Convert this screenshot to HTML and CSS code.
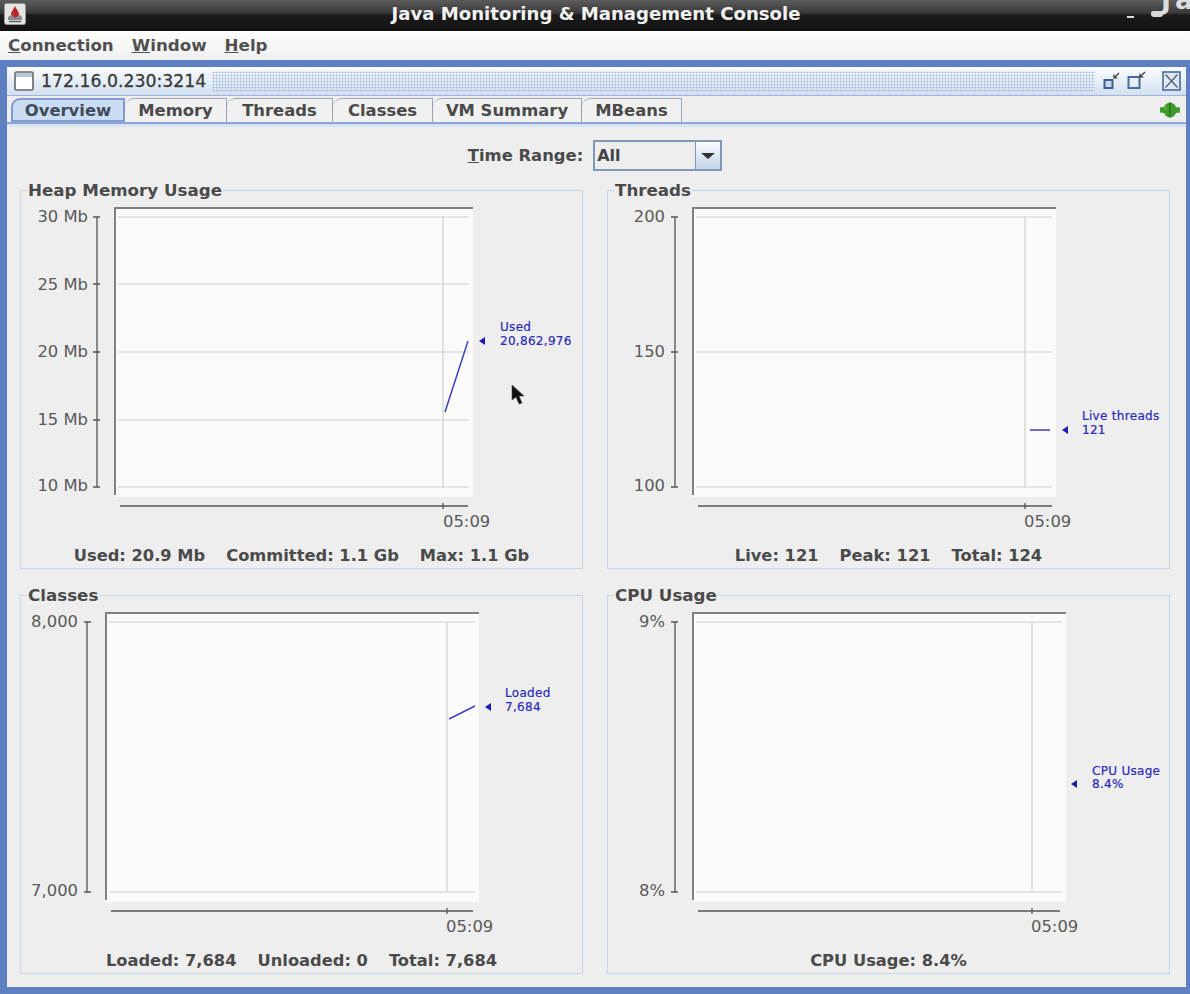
FILE: index.html
```html
<!DOCTYPE html>
<html>
<head>
    <title>Java Monitoring &amp; Management Console</title>
    <link rel="stylesheet" href="styles.css">
</head>
<body>
    <div class="app">
        <div class="titlebar">
            <svg class="app-icon" width="22" height="22" viewBox="0 0 22 22">
                <rect x="0.5" y="0.5" width="21" height="21" rx="2" fill="#e4e4e4" stroke="#999"/>
                <path d="M11 3 C13 7 15 9 15 11 C15 13.500 13 15 11 15 C9 15 7 13.500 7 11 C7 9 9 7 11 3 Z" fill="#b8282c"/>
                <path d="M4 14 L8 12 L11 15 L16 12 L18 14 L18 17 L4 17 Z" fill="#8a8d93"/>
                <path d="M5 18.500 L17 18.500" stroke="#55585e" stroke-width="1.4"/>
            </svg>
            <span class="title-text">Java Monitoring &amp; Management Console</span>
            <span class="win-min"></span>
            <span class="win-hook"></span>
            <span class="win-ghost">Ja</span>
        </div>

        <div class="menubar">
            <span class="menu"><u>C</u>onnection</span>
            <span class="menu"><u>W</u>indow</span>
            <span class="menu"><u>H</u>elp</span>
        </div>

        <div class="desktop">
            <div class="frame">
                <div class="frame-title">
                    <svg width="20" height="20" viewBox="0 0 20 20">
                        <rect x="1" y="1" width="18" height="18" rx="1.5" fill="#fff" stroke="#666" stroke-width="1.6"/>
                        <rect x="2" y="2" width="16" height="4" fill="#b9c6da"/>
                    </svg>
                    <span class="frame-name">172.16.0.230:3214</span>
                    <span class="dots"></span>
                    <div class="frame-buttons">
                        <svg width="18" height="20" viewBox="0 0 18 20">
                            <rect x="1.500" y="9" width="8" height="8" fill="#c9d8ea" stroke="#3f5f92" stroke-width="2"/>
                            <path d="M16 2 L11 7 M11 3.500 L11 7 L14.500 7" fill="none" stroke="#333" stroke-width="1.2"/>
                        </svg>
                        <svg width="20" height="20" viewBox="0 0 20 20">
                            <rect x="1.500" y="6" width="11" height="11" fill="none" stroke="#4a6a9c" stroke-width="2"/>
                            <path d="M18 1 L13 6 M13 2.500 L13 6 L16.500 6" fill="none" stroke="#333" stroke-width="1.2"/>
                        </svg>
                        <svg width="19" height="20" viewBox="0 0 19 20">
                            <rect x="1" y="1" width="17" height="18" fill="#dfe8f3" stroke="#4a6a9c" stroke-width="1.6"/>
                            <path d="M3.500 3.500 L15.500 16.500 M15.500 3.500 L3.500 16.500" stroke="#4a5a70" stroke-width="1.2"/>
                        </svg>
                    </div>
                </div>

                <div class="tabs">
                    <span class="tab tab-active">Overview</span>
                    <span class="tab tab-memory">Memory</span>
                    <span class="tab tab-threads">Threads</span>
                    <span class="tab tab-classes">Classes</span>
                    <span class="tab tab-vm">VM Summary</span>
                    <span class="tab tab-mbeans">MBeans</span>
                    <svg class="plug" width="22" height="18" viewBox="0 0 22 18">
                        <path d="M1 6.500 L5 6 C6 3 9 1.500 11 1.500 C13 1.500 16 3 17 6 L21 6.500 V11.500 L17 12 C16 15 13 16.500 11 16.500 C9 16.500 6 15 5 12 L1 11.500 Z" fill="#3f9c2c"/>
                        <path d="M11 1.500 V16.500" stroke="#1f6a14" stroke-width="1.2"/>
                        <path d="M7 5 C6.500 7 6.500 8 7 9" fill="none" stroke="#7cc868" stroke-width="1"/>
                    </svg>
                </div>

                <div class="content">
                    <div class="toolbar">
                        <span class="range-label"><u>T</u>ime Range:</span>
                        <div class="combo">
                            <span class="combo-value">All</span>
                            <span class="combo-btn"><i class="combo-arrow"></i></span>
                        </div>
                    </div>

                    <div class="panels">
                        <div class="panel">
                            <span class="legend">Heap Memory Usage</span>
                            <svg class="chart" viewBox="21 191 561 350">
                                <rect class="plot" x="114" y="207" width="359" height="290"/>
                                <path class="edge" d="M115 495 V208 H473"/>
                                <path class="grid" d="M118 217 H469 M118 284 H469 M118 352 H469 M118 420 H469 M118 487 H469 M443 217 V487"/>
                                <path class="axis" d="M97 217 V487 M93 217 H100 M93 284 H100 M93 352 H100 M93 420 H100 M93 487 H100"/>
                                <text class="tick" x="88" y="222" text-anchor="end">30 Mb</text>
                                <text class="tick" x="88" y="290" text-anchor="end">25 Mb</text>
                                <text class="tick" x="88" y="357" text-anchor="end">20 Mb</text>
                                <text class="tick" x="88" y="425" text-anchor="end">15 Mb</text>
                                <text class="tick" x="88" y="491" text-anchor="end">10 Mb</text>
                                <path class="axis" d="M120 506 H468 M443 503 V509"/>
                                <text class="tick" x="443" y="527">05:09</text>
                                <path class="series" d="M445 412 L468 341"/>
                                <path class="marker" d="M479 341 L485 337 V345 Z"/>
                                <text class="series-label" x="500" y="331">Used</text>
                                <text class="series-label" x="500" y="345">20,862,976</text>
                            </svg>
                            <div class="summary"><span>Used: 20.9 Mb</span><span>Committed: 1.1 Gb</span><span>Max: 1.1 Gb</span></div>
                        </div>

                        <div class="panel">
                            <span class="legend">Threads</span>
                            <svg class="chart" viewBox="608 191 561 350">
                                <rect class="plot" x="692" y="207" width="364" height="290"/>
                                <path class="edge" d="M693 495 V208 H1056"/>
                                <path class="grid" d="M696 217 H1052 M696 352 H1052 M696 487 H1052 M1025 217 V487"/>
                                <path class="axis" d="M675 217 V487 M671 217 H678 M671 352 H678 M671 487 H678"/>
                                <text class="tick" x="665" y="222" text-anchor="end">200</text>
                                <text class="tick" x="665" y="357" text-anchor="end">150</text>
                                <text class="tick" x="665" y="491" text-anchor="end">100</text>
                                <path class="axis" d="M698 506 H1052 M1025 503 V509"/>
                                <text class="tick" x="1024" y="527">05:09</text>
                                <path class="series" d="M1030 430 H1050"/>
                                <path class="marker" d="M1062 430 L1068 426 V434 Z"/>
                                <text class="series-label" x="1082" y="420">Live threads</text>
                                <text class="series-label" x="1082" y="434">121</text>
                            </svg>
                            <div class="summary"><span>Live: 121</span><span>Peak: 121</span><span>Total: 124</span></div>
                        </div>

                        <div class="panel">
                            <span class="legend">Classes</span>
                            <svg class="chart" viewBox="21 596 561 350">
                                <rect class="plot" x="105" y="612" width="374" height="290"/>
                                <path class="edge" d="M106 900 V613 H479"/>
                                <path class="grid" d="M109 622 H475 M109 892 H475 M447 622 V892"/>
                                <path class="axis" d="M87 622 V892 M84 622 H91 M84 892 H91"/>
                                <text class="tick" x="78" y="627" text-anchor="end">8,000</text>
                                <text class="tick" x="78" y="896" text-anchor="end">7,000</text>
                                <path class="axis" d="M111 911 H473 M447 908 V914"/>
                                <text class="tick" x="446" y="932">05:09</text>
                                <path class="series" d="M449 719 L475 706"/>
                                <path class="marker" d="M485 707 L491 703 V711 Z"/>
                                <text class="series-label" x="505" y="697">Loaded</text>
                                <text class="series-label" x="505" y="711">7,684</text>
                            </svg>
                            <div class="summary"><span>Loaded: 7,684</span><span>Unloaded: 0</span><span>Total: 7,684</span></div>
                        </div>

                        <div class="panel">
                            <span class="legend">CPU Usage</span>
                            <svg class="chart" viewBox="608 596 561 350">
                                <rect class="plot" x="692" y="612" width="374" height="290"/>
                                <path class="edge" d="M693 900 V613 H1066"/>
                                <path class="grid" d="M696 622 H1062 M696 892 H1062 M1032 622 V892"/>
                                <path class="axis" d="M675 622 V892 M671 622 H678 M671 892 H678"/>
                                <text class="tick" x="665" y="627" text-anchor="end">9%</text>
                                <text class="tick" x="665" y="896" text-anchor="end">8%</text>
                                <path class="axis" d="M698 911 H1060 M1032 908 V914"/>
                                <text class="tick" x="1031" y="932">05:09</text>
                                <path class="marker" d="M1071 784 L1077 780 V788 Z"/>
                                <text class="series-label" x="1092" y="775">CPU Usage</text>
                                <text class="series-label" x="1092" y="788">8.4%</text>
                            </svg>
                            <div class="summary"><span>CPU Usage: 8.4%</span></div>
                        </div>
                    </div>
                </div>
            </div>
        </div>

        <svg class="cursor" width="16" height="22" viewBox="0 0 16 22">
            <path d="M1 1 L1 16 L5 13 L8 20 L11 19 L8 12 L13 12 Z" fill="#111" stroke="#444" stroke-width="0.6"/>
        </svg>
    </div>
</body>
</html>
```

FILE: styles.css
```css
* {
    box-sizing: border-box;
}
body {
    margin: 0;
    overflow: hidden;
    font-family: "DejaVu Sans", sans-serif;
    color: #444;
}
.app {
    position: relative;
    display: flex;
    flex-direction: column;
    height: 994px;
    width: 1190px;
    overflow: hidden;
}
.titlebar {
    position: relative;
    flex: none;
    height: 31px;
    background: linear-gradient(#5c5c5c 0, #3a3a3a 42%, #1c1c1c 48%, #111 100%);
    display: flex;
    align-items: center;
    justify-content: center;
}
.app-icon {
    position: absolute;
    left: 4px;
    top: 3px;
}
.title-text {
    color: #f2f2f2;
    font-weight: bold;
    font-size: 18.100px;
    margin-left: 2px;
    margin-bottom: 5px;
}
.win-min {
    position: absolute;
    left: 1127px;
    top: 16px;
    width: 7px;
    height: 2px;
    background: #ddd;
}
.win-hook {
    position: absolute;
    left: 1151px;
    top: 11px;
    width: 12px;
    height: 6px;
    background: #d8d8d8;
    border-radius: 2px 0 3px 3px;
}
.win-ghost {
    position: absolute;
    left: 1161px;
    top: -18px;
    height: 36px;
    line-height: 36px;
    color: #ddd;
    font-weight: bold;
    font-size: 27px;
    letter-spacing: 4px;
    overflow: hidden;
}
.menubar {
    flex: none;
    height: 29px;
    background: linear-gradient(#fff, #efefef);
    display: flex;
    align-items: center;
    padding: 0 0 2px 8px;
    gap: 18px;
    font-size: 16.700px;
    font-weight: bold;
    color: #505050;
}
.desktop {
    flex: 1;
    min-height: 0;
    background: #5f80c0;
    padding: 7px 4px 7px 7px;
    display: flex;
}
.frame {
    flex: 1;
    display: flex;
    flex-direction: column;
    background: #eee;
    border-radius: 3px 3px 0 0;
}
.frame-title {
    flex: none;
    height: 29px;
    display: flex;
    align-items: center;
    padding: 0 5px 0 7px;
    background: linear-gradient(#fbfcfe, #d3e0f0);
    border-bottom: 1px solid #9fb4d6;
}
.frame-name {
    margin-left: 7px;
    font-size: 17.300px;
    color: #3a3a3a;
    -webkit-text-stroke: 0.3px #3a3a3a;
}
.dots {
    flex: 1;
    height: 21px;
    margin: 0 8px 0 6px;
    background-image: radial-gradient(circle, #a6bbdc 0.9px, transparent 1.1px);
    background-size: 3px 3px;
}
.frame-buttons {
    display: flex;
    align-items: center;
    gap: 6px;
}
.frame-buttons svg + svg + svg {
    margin-left: 9px;
}
.tabs {
    flex: none;
    height: 31px;
    display: flex;
    align-items: flex-end;
    padding: 0 5px 0 4px;
    border-bottom: 3px solid #d6e3f2;
    position: relative;
}
.tabs::after {
    content: "";
    position: absolute;
    left: 0;
    right: 0;
    bottom: 0;
    height: 2px;
    background: #8ea6d4;
}
.tab {
    height: 24px;
    display: flex;
    align-items: center;
    justify-content: center;
    font-size: 16.400px;
    font-weight: bold;
    color: #4a4a4a;
    background: #f1f1f1;
    border: 1px solid #99a3b3;
    border-left: 0;
    border-bottom: 0;
    border-top-left-radius: 9px;
    margin-bottom: 2px;
}
.tab-active {
    width: 114px;
    background: #c9dcf2;
    border: 2px solid #7f9bd0;
    z-index: 1;
    position: relative;
    color: #3f4a5a;
}
.tab-memory { width: 102px; }
.tab-threads { width: 106px; }
.tab-classes { width: 100px; }
.tab-vm { width: 149px; }
.tab-mbeans { width: 100px; }
.plug {
    margin: 0 0 5px auto;
}
.content {
    flex: 1;
    min-height: 0;
    padding: 0 16px 13px 13px;
    display: flex;
    flex-direction: column;
}
.toolbar {
    flex: none;
    height: 63px;
    padding-top: 13px;
    display: flex;
    justify-content: center;
    align-items: flex-start;
    gap: 10px;
}
.range-label {
    font-size: 16.400px;
    font-weight: bold;
    line-height: 31px;
    color: #4a4a4a;
}
.combo {
    width: 129px;
    height: 31px;
    display: flex;
    background: #eee;
    border: 2px solid #7f9ab8;
}
.combo-value {
    flex: 1;
    font-size: 16px;
    font-weight: bold;
    line-height: 27px;
    padding-left: 2px;
    color: #444;
}
.combo-btn {
    width: 25px;
    display: flex;
    align-items: center;
    justify-content: center;
    background: linear-gradient(#fbfcfe, #c3d4e9);
    border-left: 1px solid #7f9ab8;
}
.combo-arrow {
    border-left: 7px solid transparent;
    border-right: 7px solid transparent;
    border-top: 6px solid #333;
}
.panels {
    flex: 1;
    min-height: 0;
    display: grid;
    grid-template-columns: 563px 563px;
    grid-template-rows: 379px 379px;
    column-gap: 24px;
    row-gap: 26px;
}
.panel {
    position: relative;
    border: 1px solid #c6d6e8;
    display: flex;
    flex-direction: column;
}
.legend {
    position: absolute;
    left: 6px;
    top: -10px;
    line-height: 18px;
    background: #eee;
    padding: 0 1px;
    font-size: 16.700px;
    font-weight: bold;
    color: #4a4a4a;
}
.chart {
    flex: none;
    width: 561px;
    height: 350px;
    display: block;
}
.plot {
    fill: #fbfbfb;
}
.edge {
    fill: none;
    stroke: #808080;
    stroke-width: 2;
}
.grid {
    fill: none;
    stroke: #d0d0d0;
    stroke-width: 1.200;
}
.axis {
    fill: none;
    stroke: #555;
    stroke-width: 1.300;
}
.tick {
    font-size: 16.400px;
    fill: #5a5a5a;
}
.series {
    fill: none;
    stroke: #3f3fc0;
    stroke-width: 1.500;
}
.marker {
    fill: #1c1cb4;
}
.series-label {
    font-size: 12px;
    fill: #2a2ab8;
    stroke: #2a2ab8;
    stroke-width: 0.2px;
    letter-spacing: 0.3px;
}
.summary {
    flex: 1;
    display: flex;
    justify-content: center;
    gap: 21px;
    font-size: 16.300px;
    font-weight: bold;
    color: #4a4a4a;
    line-height: 30px;
}
.cursor {
    position: absolute;
    left: 511px;
    top: 384px;
}
```
